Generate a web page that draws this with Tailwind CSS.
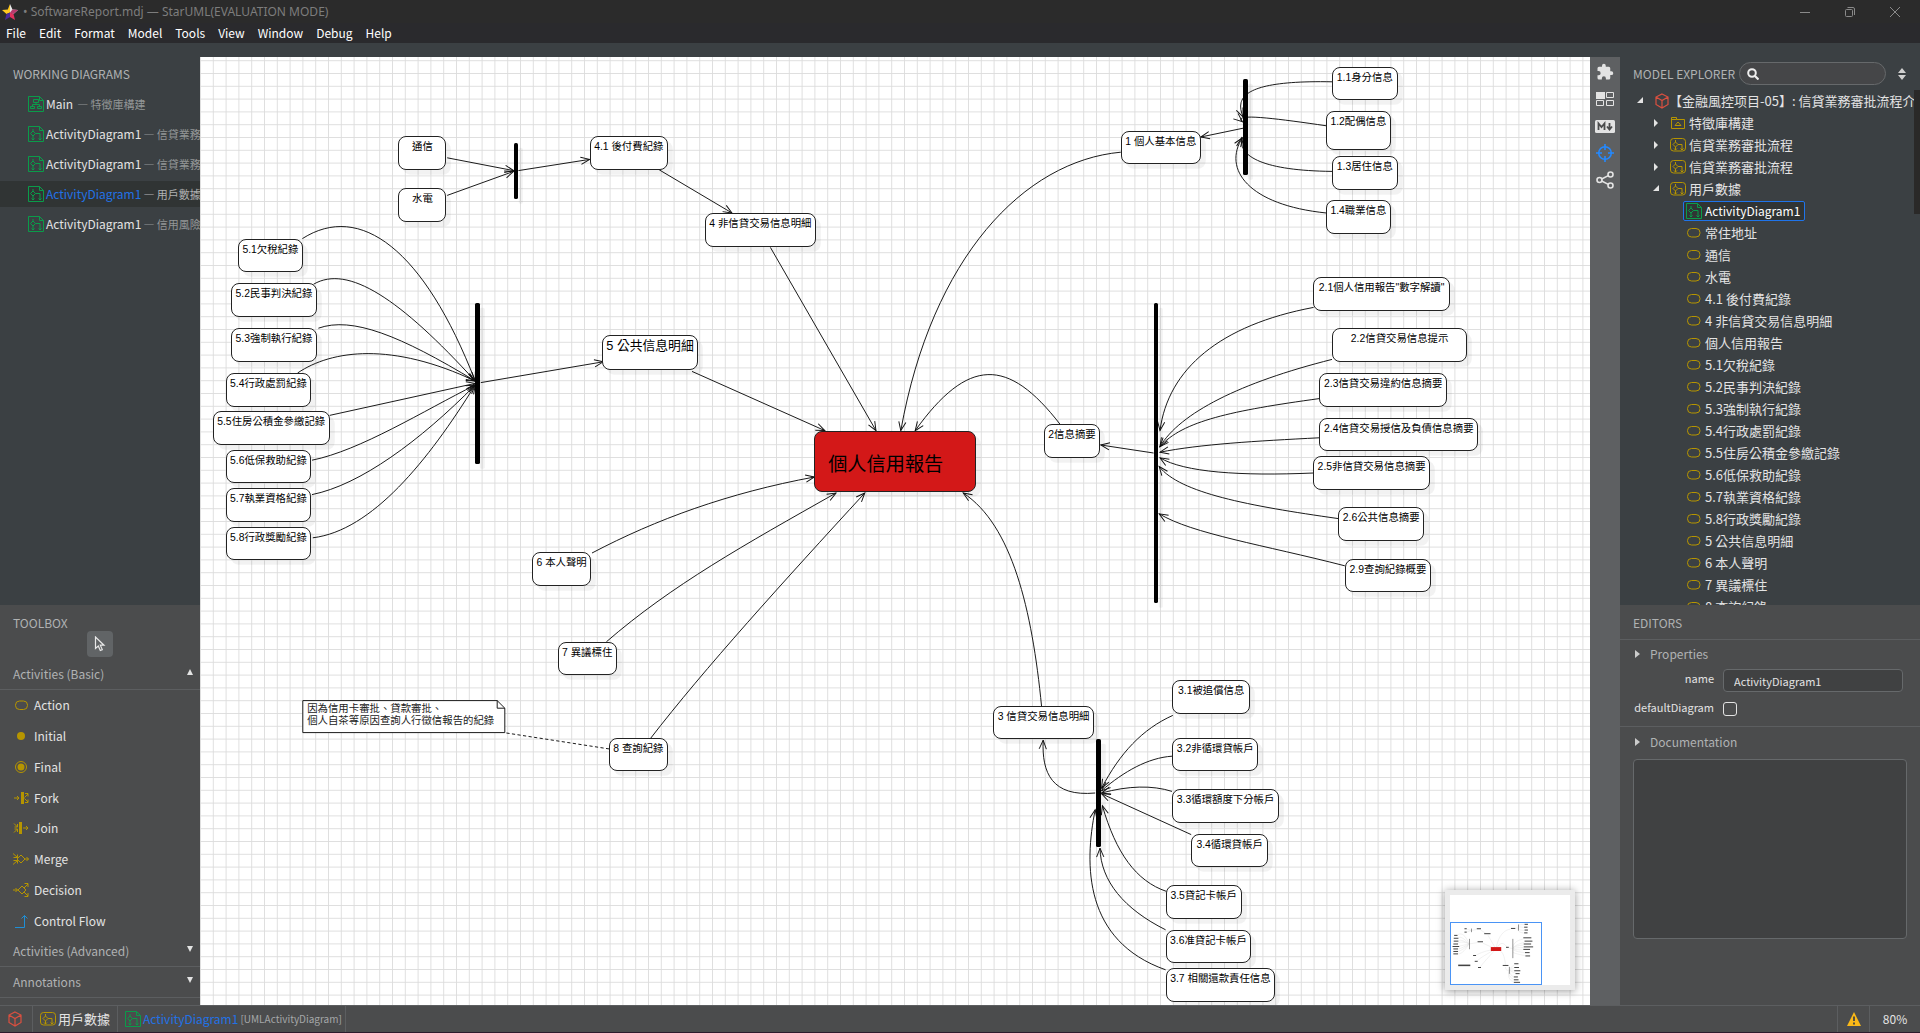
<!DOCTYPE html>
<html lang="zh-Hant">
<head>
<meta charset="utf-8">
<title>SoftwareReport.mdj — StarUML</title>
<script src="https://cdn.jsdelivr.net/npm/@tailwindcss/browser@4"></script>
</head>
<body class="flex h-screen flex-col overflow-hidden bg-[#3b4043] font-['Noto_Sans_CJK_TC',sans-serif] text-[12px] leading-5 text-[#e3e3e3]">

<svg class="hidden">
  <symbol id="i-activity-diagram" viewBox="0 0 16 16"><path d="M11.5.5H.5v15h15V4.5zM11.5.5v4h4M5 3v2M5 5L2.5 7.5 5 10l2.5-2.5zM5 10v4M3.5 12.5L5 14l1.5-1.5M7.5 7.5H12V14M10.5 12.5L12 14l1.5-1.5" fill="none" stroke="currentColor"/></symbol>
  <symbol id="i-class-diagram" viewBox="0 0 16 16"><path d="M11.5.5H.5v15h15V4.5zM11.5.5v4h4M5.5 3.5h5v3h-5zM2.5 10.500h4v2h-4zM9.500 10.500h4v2h-4zM8 6.500v2M4.500 10.500v-2h7v2" fill="none" stroke="currentColor"/></symbol>
  <symbol id="i-activity" viewBox="0 0 16 14"><rect x=".5" y=".5" width="15" height="12.500" rx="3" fill="none" stroke="currentColor"/><path d="M5.500 2v2M5.500 4L3 6.500 5.500 9 8 6.500zM5.500 9v3M4 10.500L5.500 12 7 10.500M8 6.500h4V12M10.500 10.500L12 12l1.500-1.500" fill="none" stroke="currentColor"/></symbol>
  <symbol id="i-package" viewBox="0 0 16 14"><path d="M1.500 12.500v-11h5v2h8v9zM1.500 3.500h5M5 9.500h6L8 6z" fill="none" stroke="currentColor"/></symbol>
  <symbol id="i-cube" viewBox="0 0 16 16"><path d="M8 1l6 3v7.500L8 15l-6-3.500V4zM2 4l6 3.500L14 4M8 7.500V15" fill="none" stroke="currentColor" stroke-width="1.200"/></symbol>
  <symbol id="i-action" viewBox="0 0 14 10"><rect x=".5" y=".5" width="12.500" height="8.500" rx="4" fill="none" stroke="currentColor"/></symbol>
</svg>

<header class="shrink-0">
  <div class="flex h-[23px] items-center bg-[#2b2b2b] pl-[2px] text-[#7d7d7d]">
    <svg class="size-4" viewBox="0 0 16 16"><path d="M8 0L5.800 5.400 0 6l4.500 4L8 8.500z" fill="#ffc91f"/><path d="M8 0v8.500l3.500 1.500L16 6l-5.500-.6z" fill="#e8e8e8"/><path d="M4.500 10L3 16l5-3V8.500z" fill="#4b2a9b"/><path d="M8 8.500V13l5 3-1.500-6z" fill="#e2325e"/><path d="M10.500 5.400L16 6l-4.500 4L8 8.500z" fill="#b93a6c"/></svg>
    <h1 class="ml-[5px] font-['Noto_Sans',sans-serif] text-[12px] font-normal">• SoftwareReport.mdj — StarUML(EVALUATION MODE)</h1>
    <div class="ml-auto flex items-center gap-[35px] pr-[20px]">
      <button aria-label="Minimize"><svg class="size-[10px]" viewBox="0 0 10 10"><path d="M0 5.500h10" stroke="#8a8a8a"/></svg></button>
      <button aria-label="Restore"><svg class="size-[10px]" viewBox="0 0 10 10" fill="none" stroke="#8a8a8a"><rect x=".5" y="2.500" width="7" height="7" rx="1"/><path d="M2.500.5h5.500a1.500 1.500 0 0 1 1.500 1.500v6"/></svg></button>
      <button aria-label="Close"><svg class="size-[10px]" viewBox="0 0 10 10"><path d="M0 0l10 10M10 0L0 10" stroke="#8a8a8a"/></svg></button>
    </div>
  </div>
  <nav class="flex h-5 items-center gap-[13px] bg-[#2a2a2d] pl-[6px] text-white">
    <button>File</button><button>Edit</button><button>Format</button><button>Model</button><button>Tools</button><button>View</button><button>Window</button><button>Debug</button><button>Help</button>
  </nav>
  <div class="h-[14px]"></div>
</header>

<div class="flex min-h-0 flex-1">
  <aside class="flex w-[200px] shrink-0 flex-col">
    <section class="min-h-0 flex-1">
      <h2 class="px-[13px] py-[7px] text-[#b0b2b3]">WORKING DIAGRAMS</h2>
      <ul class="flex flex-col gap-1 whitespace-nowrap">
        <li class="flex h-[26px] items-center gap-[2px] overflow-hidden pl-7"><svg class="size-4 shrink-0 text-[#0a9c4a]"><use href="#i-class-diagram"/></svg>Main<span class="ml-[2px] text-[11px] text-[#939697]">— 特徵庫構建</span></li>
        <li class="flex h-[26px] items-center gap-[2px] overflow-hidden pl-7"><svg class="size-4 shrink-0 text-[#0a9c4a]"><use href="#i-activity-diagram"/></svg>ActivityDiagram1<span class="text-[11px] text-[#939697]">— 信貸業務審批流程</span></li>
        <li class="flex h-[26px] items-center gap-[2px] overflow-hidden pl-7"><svg class="size-4 shrink-0 text-[#0a9c4a]"><use href="#i-activity-diagram"/></svg>ActivityDiagram1<span class="text-[11px] text-[#939697]">— 信貸業務審批流程</span></li>
        <li class="flex h-[26px] items-center gap-[2px] overflow-hidden bg-[#303434] pl-7 text-[#2272e6]"><svg class="size-4 shrink-0 text-[#0a9c4a]"><use href="#i-activity-diagram"/></svg>ActivityDiagram1<span class="text-[11px] text-[#b0b2b3]">— 用戶數據</span></li>
        <li class="flex h-[26px] items-center gap-[2px] overflow-hidden pl-7"><svg class="size-4 shrink-0 text-[#0a9c4a]"><use href="#i-activity-diagram"/></svg>ActivityDiagram1<span class="text-[11px] text-[#939697]">— 信用風險策略</span></li>
      </ul>
    </section>
    <section class="flex h-[400px] shrink-0 flex-col bg-[#4b4c4d]">
      <h2 class="px-[13px] pt-2 text-[#b0b2b3]">TOOLBOX</h2>
      <button aria-label="Select" class="mx-auto mt-[-2px] grid size-[26px] shrink-0 place-items-center rounded bg-[#616466]"><svg class="h-4 w-3" viewBox="0 0 12 16"><path d="M1.500 1v11.500l2.800-2.500 2 4.500 2-.9-2-4.400H10z" fill="none" stroke="#e8e8e8" stroke-width="1.200"/></svg></button>
      <button class="mt-[2px] flex h-[31px] shrink-0 items-center justify-between border-b border-[#5c5e60] pr-[7px] pl-[13px] text-[#b0b2b3]">Activities (Basic)<svg class="mb-1 size-[6px]" viewBox="0 0 6 6"><path d="M3 0l3 6H0z" fill="#e3e3e3"/></svg></button>
      <ul class="grid h-[246px] shrink-0 auto-rows-fr">
        <li class="flex items-center gap-[5px] pl-[13px]"><svg class="h-4 w-4 text-[#b69500]" viewBox="0 0 16 16"><rect x="2.500" y="4" width="12" height="8.500" rx="4" fill="none" stroke="currentColor"/></svg>Action</li>
        <li class="flex items-center gap-[5px] pl-[13px]"><svg class="h-4 w-4 text-[#b69500]" viewBox="0 0 16 16"><circle cx="8" cy="8" r="4" fill="currentColor"/></svg>Initial</li>
        <li class="flex items-center gap-[5px] pl-[13px]"><svg class="h-4 w-4 text-[#b69500]" viewBox="0 0 16 16"><circle cx="8" cy="8" r="5.500" fill="none" stroke="currentColor"/><circle cx="8" cy="8" r="3.500" fill="currentColor"/></svg>Final</li>
        <li class="flex items-center gap-[5px] pl-[13px]"><svg class="h-4 w-4 text-[#b69500]" viewBox="0 0 16 16"><path d="M8 2h3v12H8z" fill="currentColor"/><path d="M1 8h5M4 6l2 2-2 2M11.500 7.500L15 4M12 3.500h3v3M11.500 8.500L15 12M12 12.500h3v-3" fill="none" stroke="currentColor"/></svg>Fork</li>
        <li class="flex items-center gap-[5px] pl-[13px]"><svg class="h-4 w-4 text-[#b69500]" viewBox="0 0 16 16"><path d="M6 2h3v12H6z" fill="currentColor"/><path d="M1 3.500L4.500 7M4.500 4v3h-3M1 12.500L4.500 9M4.500 12V9h-3M10 8h5M13 6l2 2-2 2" fill="none" stroke="currentColor"/></svg>Join</li>
        <li class="flex items-center gap-[5px] pl-[13px]"><svg class="h-4 w-4 text-[#b69500]" viewBox="0 0 16 16"><path d="M8 4l4 4-4 4-4-4zM0 2.500l4.500 4M4.500 3.500v3h-4M0 13.500l4.500-4M4.500 12.500v-3h-4M12 8h3.500M13.500 6l2 2-2 2" fill="none" stroke="currentColor"/></svg>Merge</li>
        <li class="flex items-center gap-[5px] pl-[13px]"><svg class="h-4 w-4 text-[#b69500]" viewBox="0 0 16 16"><path d="M9 4l4 4-4 4-4-4zM0 8h4.500M2.500 6l2 2-2 2M11 6l4-4M11.500 1.500H15V5M11 10l4 4M11.500 14.500H15V11" fill="none" stroke="currentColor"/></svg>Decision</li>
        <li class="flex items-center gap-[5px] pl-[13px]"><svg class="h-4 w-4 text-[#1f8fd6]" viewBox="0 0 16 16"><path d="M2 14.500h9.500v-12M8.500 5.500l3-3 3 3" fill="none" stroke="currentColor"/></svg>Control Flow</li>
      </ul>
      <button class="flex h-[31px] shrink-0 items-center justify-between border-b border-[#5c5e60] pr-[7px] pl-[13px] text-[#b0b2b3]">Activities (Advanced)<svg class="mb-1 size-[6px]" viewBox="0 0 6 6"><path d="M0 0h6L3 6z" fill="#e3e3e3"/></svg></button>
      <button class="flex h-[31px] shrink-0 items-center justify-between border-b border-[#5c5e60] pr-[7px] pl-[13px] text-[#b0b2b3]">Annotations<svg class="mb-1 size-[6px]" viewBox="0 0 6 6"><path d="M0 0h6L3 6z" fill="#e3e3e3"/></svg></button>
    </section>
  </aside>

  <main class="relative min-w-0 flex-1 overflow-hidden bg-white">
    <!-- diagram layer, shown at 80% -->
    <div id="diagram" class="absolute inset-0 font-['Liberation_Sans','Noto_Sans_CJK_TC',sans-serif] text-[13px] leading-[15px] text-black [zoom:0.8]">
      <svg class="absolute inset-0 size-full">
        <defs>
          <pattern id="grid" y="4" width="16" height="16" patternUnits="userSpaceOnUse"><path d="M0 .5h16M.5 0v16" stroke="#dadada" stroke-width="1.200"/></pattern>
          <marker id="arrow" markerUnits="userSpaceOnUse" markerWidth="14" markerHeight="12" refX="12" refY="6" orient="auto"><path d="M1 1.500L12 6 1 10.500" fill="none" stroke="#111" stroke-width="1.200"/></marker>
        </defs>
        <rect width="100%" height="100%" fill="url(#grid)"/>
        <g id="edges" fill="none" stroke="#111" stroke-width="1.200" marker-end="url(#arrow)"></g>
        <path d="M383 845L512 865" fill="none" stroke="#111" stroke-width="1.200" stroke-dasharray="4 3"/>
        <path d="M128.500 804.500h243l9.500 9.500v30.500h-252.500z" fill="#fff" stroke="#111" stroke-width="1.200"/>
        <path d="M371.500 804.500v9.500h9.500" fill="none" stroke="#111" stroke-width="1.200"/>
      </svg>
      <p class="absolute top-[807px] left-[134px] text-[13px] leading-[15px] text-[#222]">因為信用卡審批、貸款審批、<br>個人自茶等原因查詢人行徵信報告的紀錄</p>
    </div>

    <!-- overview map -->
    <div class="absolute right-[15px] bottom-[15px] h-[100px] w-[130px] bg-[#ebebeb] p-[5px] shadow-[0_1px_8px_#00000066]">
      <div class="flex h-full flex-col items-start justify-end bg-white">
        <svg class="h-[63px] w-[92px] border border-[#4a94f5]" viewBox="0 0 1737 1185"><g id="overview-edges" fill="none" stroke="#ddd" stroke-width="8"></g><g id="overview"></g></svg>
      </div>
    </div>
  </main>

  <nav class="flex w-[30px] shrink-0 flex-col items-center gap-[9px] bg-[#5e6062] pt-[6px] text-[#e3e3e3]">
    <button aria-label="Extensions"><svg class="size-[18px]" viewBox="0 0 24 24" fill="currentColor"><path d="M20.500 11H19V7a2 2 0 0 0-2-2h-4V3.500a2.500 2.500 0 0 0-5 0V5H4a2 2 0 0 0-2 2v3.800h1.500a2.700 2.700 0 0 1 0 5.400H2V20a2 2 0 0 0 2 2h3.800v-1.500a2.700 2.700 0 0 1 5.400 0V22H17a2 2 0 0 0 2-2v-4h1.500a2.500 2.500 0 0 0 0-5z"/></svg></button>
    <button aria-label="Thumbnails"><svg class="size-[18px]" viewBox="0 0 18 18"><path d="M0 2h9v7H0z" fill="currentColor"/><path d="M10.500 2.500h7v5h-7zM10.500 10.500h7v5h-7zM.5 10.500h7v5h-7z" fill="none" stroke="currentColor"/></svg></button>
    <button aria-label="Markdown"><svg class="h-[18px] w-5" viewBox="0 0 20 18"><rect y="3" width="20" height="13" rx="1.500" fill="currentColor"/><path d="M3.500 13V6.500L6.500 10l3-3.500V13M14.500 6v6M12 9.500l2.500 3 2.500-3" fill="none" stroke="#4b4c4d" stroke-width="1.800"/></svg></button>
    <button aria-label="Locate" class="text-[#2489ff]"><svg class="size-[18px]" viewBox="0 0 18 18"><circle cx="9" cy="9" r="6.300" fill="none" stroke="currentColor" stroke-width="1.600"/><path d="M9 0v6M9 12v6M0 9h6M12 9h6" stroke="currentColor" stroke-width="1.600"/></svg></button>
    <button aria-label="Relationships"><svg class="size-[18px]" viewBox="0 0 18 18" fill="none" stroke="currentColor" stroke-width="1.600"><circle cx="3.500" cy="9" r="2.500"/><circle cx="14.500" cy="3.500" r="2.500"/><circle cx="14.500" cy="14.500" r="2.500"/><path d="M5.700 8l6.600-3.400M5.700 10l6.600 3.400"/></svg></button>
  </nav>

  <aside class="flex w-[300px] shrink-0 flex-col">
    <section class="flex min-h-0 flex-1 flex-col">
      <div class="flex h-[33px] shrink-0 items-center pl-[13px] whitespace-nowrap text-[#b0b2b3]">
        <h2>MODEL EXPLORER</h2>
        <div class="mr-3 ml-auto flex h-[23px] w-[147px] items-center rounded-full border border-[#66696b] bg-[#454648] pl-[7px]">
          <svg class="size-3 shrink-0" viewBox="0 0 12 12"><circle cx="5" cy="5" r="3.800" fill="none" stroke="#eee" stroke-width="2"/><path d="M8 8l3.500 3.500" stroke="#eee" stroke-width="2.200"/></svg>
          <input type="search" aria-label="Search model" class="min-w-0 flex-1 bg-transparent px-1 outline-none">
        </div>
        <button aria-label="Sort" class="mr-[14px]"><svg class="h-3 w-2" viewBox="0 0 8 12"><path d="M4 0l4 5H0zM0 7h8l-4 5z" fill="#d0d0d0"/></svg></button>
      </div>
      <div class="flex min-h-0 flex-1">
        <ul id="tree" class="min-w-0 flex-1 overflow-hidden text-[13px] whitespace-nowrap"></ul>
        <div class="w-[6px] shrink-0"><div class="h-[124px] bg-[#2a2928]"></div></div>
      </div>
    </section>
    <section class="h-[400px] shrink-0 bg-[#4b4c4d]">
      <h2 class="h-[35px] border-b border-[#5c5e60] px-[13px] pt-2 text-[#b0b2b3]">EDITORS</h2>
      <button class="flex h-7 w-full items-center gap-[10px] pl-[15px] text-[#b0b2b3]"><svg class="h-2 w-[5px]" viewBox="0 0 5 8"><path d="M0 0l5 4-5 4z" fill="#ccc"/></svg>Properties</button>
      <div class="grid grid-cols-[81px_1fr] gap-x-[9px] pl-[13px] text-[11px]">
        <label for="prop-name" class="text-right">name</label>
        <input id="prop-name" value="ActivityDiagram1" class="mt-[1px] mr-[17px] h-[23px] min-w-0 rounded border border-[#66696b] bg-[#404142] px-[10px] outline-none">
        <label for="prop-default" class="mt-[5px] text-right">defaultDiagram</label>
        <input id="prop-default" type="checkbox" class="mt-[10px] size-[14px] appearance-none rounded-[3px] border border-[#e3e3e3]">
      </div>
      <button class="mt-[9px] flex h-[31px] w-full items-center gap-[10px] border-t border-[#5c5e60] pl-[15px] text-[#b0b2b3]"><svg class="h-2 w-[5px]" viewBox="0 0 5 8"><path d="M0 0l5 4-5 4z" fill="#ccc"/></svg>Documentation</button>
      <div class="px-[13px] pt-[2px]"><textarea aria-label="Documentation" class="block h-[180px] w-full resize-none rounded border border-[#66696b] bg-[#404142]"></textarea></div>
    </section>
  </aside>
</div>

<footer class="flex h-7 shrink-0 items-stretch border-t border-b border-t-[#5c5e60] border-b-[#2c1a2c] bg-[#4b4c4d]">
  <div class="flex w-[33px] items-center justify-center border-r border-[#5c5e60] pr-[3px]"><svg class="size-4 text-[#db5040]"><use href="#i-cube"/></svg></div>
  <div class="flex items-center gap-[2px] border-r border-[#5c5e60] px-[7px] text-[13px]"><svg class="h-[14px] w-4 text-[#b69500]"><use href="#i-activity"/></svg>用戶數據</div>
  <div class="flex items-center gap-[2px] border-r border-[#5c5e60] pr-[3px] pl-[7px] text-[#2272e6]"><svg class="size-4 text-[#0a9c4a]"><use href="#i-activity-diagram"/></svg>ActivityDiagram1<span class="text-[10px] text-[#a5a7a8]">[UMLActivityDiagram]</span></div>
  <div class="ml-auto flex w-8 items-center justify-center border-l border-[#5c5e60]"><svg class="size-[14px]" viewBox="0 0 14 14"><path d="M7 0l7 14H0z" fill="#fbb917"/><path d="M7 4.500v4.500M7 10.500v2" stroke="#444" stroke-width="1.800"/></svg></div>
  <div class="flex w-[51px] items-center justify-center border-l border-[#5c5e60]">80%</div>
</footer>

<script>
// Diagram nodes in model units: [label, x, y, width, height]
const nodes = [
  ['通信',248,99,60,42],['水電',248,164,60,42],['4.1 後付費紀錄',487,99,98,42],['4 非信貸交易信息明細',631,195,139,42],
  ['5.1欠稅紀錄',47,227,82,42],['5.2民事判決紀錄',39,283,107,42],['5.3強制執行紀錄',39,339,107,42],['5.4行政處罰紀錄',32,395,107,42],
  ['5.5住房公積金參繳記錄',16,443,146,42],['5.6低保救助紀錄',32,491,107,42],['5.7執業資格紀錄',32,539,107,42],['5.8行政獎勵紀錄',32,587,107,42],
  ['6 本人聲明',415,619,74,42],['7 異議標住',447,731,74,42],['8 查詢紀錄',511,851,74,42],
  ['1.1身分信息',1415,12,82,42],['1.2配偶信息',1407,68,82,48],['1.3居住信息',1415,124,82,42],['1.4職業信息',1407,179,82,42],['1 個人基本信息',1151,92,100,42],
  ['2.1個人信用報告"數字解讀"',1391,275,172,42],['2.2信貸交易信息提示',1415,339,169,42],['2.3信貸交易違約信息摘要',1399,395,160,42],['2.4信貸交易授信及負債信息摘要',1399,451,199,42],
  ['2.5非信貸交易信息摘要',1391,499,147,42],['2.6公共信息摘要',1423,563,107,42],['2.9查詢紀錄概要',1431,627,108,42],['2信息摘要',1055,459,70,42],
  ['3 信貸交易信息明細',991,811,127,42],['3.1被追償信息',1215,779,98,42],['3.2非循環貸帳戶',1215,851,108,42],['3.3循環額度下分帳戶',1215,915,134,42],
  ['3.4循環貸帳戶',1239,971,96,42],['3.5貸記卡帳戶',1207,1035,95,42],['3.6准貸記卡帳戶',1207,1091,107,42],['3.7 相關還款責任信息',1207,1139,137,42]
];
const bars = [[392,108,70],[344,308,201],[1304,28,120],[1192,308,375],[1120,852,136]];
const edges = [
  'M309 126L392 142','M309 173L392 143','M398 142L487 128','M574 141L665 195','M713 238L845 467','M615 393L781 467','M351 407L504 381',
  'M128 227C200 181 280 240 344 405','M142 284C185 259 250 302 344 405','M148 339C190 324 250 348 344 405','M122 395C165 366 240 356 344 405',
  'M162 448L344 408','M140 504C200 492 280 442 344 410','M140 547C200 535 275 480 344 410','M141 601C215 592 285 505 344 410',
  'M490 620C570 578 660 545 768 525','M508 731C590 660 680 610 795 545','M563 852C630 765 730 655 831 545',
  'M1151 119C1030 130 915 250 876 467','M1075 459C1010 375 960 375 894 467','M1192 495L1126 485','M1052 812C1040 690 1015 585 954 545','M1119 920C1065 925 1052 895 1054 854',
  'M1304 89L1251 100','M1415 31C1310 29 1292 48 1304 75','M1408 86C1340 76 1290 70 1303 81','M1415 143C1330 142 1298 125 1302 101','M1408 195C1310 185 1278 140 1303 101',
  'M1392 313C1275 335 1210 390 1200 467','M1415 378C1300 407 1225 445 1200 487','M1399 427C1290 442 1228 455 1200 487','M1399 476C1320 480 1250 484 1200 494',
  'M1392 520C1300 524 1230 519 1200 501','M1423 577C1310 561 1225 545 1199 512','M1431 636C1330 610 1240 596 1199 571',
  'M1216 823C1178 840 1150 870 1127 914','M1215 874C1185 876 1155 893 1127 917','M1215 918C1190 910 1160 911 1127 920','M1239 972L1127 921',
  'M1208 1043C1170 1030 1145 995 1128 936','M1207 1091C1155 1065 1126 1030 1125 989','M1207 1141C1105 1105 1105 1010 1119 941'
];
const diagram = document.getElementById('diagram');
const place = (el, x, y, w, h) => { el.style.cssText = `left:${x}px;top:${y}px;width:${w}px;height:${h}px`; diagram.append(el); };
const add = (cls, text, x, y, w, h) => { const el = document.createElement('div'); el.className = cls; el.textContent = text; place(el, x, y, w, h); };
for (const [t, x, y, w, h] of nodes) add('absolute rounded-[10px] border border-[#222] bg-white pt-[5px] text-center whitespace-nowrap shadow-[6px_6px_0_#0000000d]', t, x, y, w, h);
add('absolute rounded-[10px] border border-[#222] bg-white pt-[4px] text-center text-[16px] leading-[18px] whitespace-nowrap shadow-[6px_6px_0_#0000000d]', '5 公共信息明細', 503, 347, 119, 44);
add('absolute flex items-center rounded-[10px] border border-[#222] bg-[#d31818] pt-[8px] pl-[16px] text-[24px] leading-[28px] whitespace-nowrap shadow-[6px_6px_0_#0000000d]', '個人信用報告', 768, 468, 202, 76);
for (const [x, y, h] of bars) add('absolute rounded-[2px] bg-black shadow-[6px_6px_0_#0000000d]', '', x, y, 6, h);
document.getElementById('edges').innerHTML = edges.map(d => `<path d="${d}"/>`).join('');
document.getElementById('overview-edges').innerHTML = edges.map(d => `<path d="${d}"/>`).join('');
document.getElementById('overview').innerHTML =
  nodes.map(([, x, y, w]) => `<rect x="${x + 8}" y="${y + 4}" width="${w - 16}" height="18" fill="#333"/>`).join('') +
  bars.map(([x, y, h]) => `<rect x="${x}" y="${y}" width="10" height="${h}" fill="#333"/>`).join('') +
  '<rect x="510" y="356" width="106" height="18" fill="#333"/><rect x="134" y="808" width="235" height="30" fill="#444"/><rect x="768" y="468" width="202" height="76" fill="#d31818"/>';

// Model tree: [level, icon, label, state]
const tree = [
  [0,'cube','【金融風控项目-05】: 信貸業務審批流程介紹','open'],[1,'package','特徵庫構建','closed'],[1,'activity','信貸業務審批流程','closed'],[1,'activity','信貸業務審批流程','closed'],[1,'activity','用戶數據','open'],
  [2,'activity-diagram','ActivityDiagram1','selected'],
  ...['常住地址','通信','水電','4.1 後付費紀錄','4 非信貸交易信息明細','個人信用報告','5.1欠稅紀錄','5.2民事判決紀錄','5.3強制執行紀錄','5.4行政處罰紀錄','5.5住房公積金參繳記錄','5.6低保救助紀錄','5.7執業資格紀錄','5.8行政獎勵紀錄','5 公共信息明細','6 本人聲明','7 異議標住','8 查詢紀錄'].map(t => [2,'action',t,''])
];
const pads = ['pl-[17px]', 'pl-[33px]', 'pl-[63px]'];
const icons = {
  cube: '-mr-[4px] size-4 text-[#db5040]', package: 'h-[14px] w-4 text-[#b69500]', activity: 'h-[14px] w-4 text-[#b69500]',
  'activity-diagram': 'size-4 text-[#0a9c4a]', action: 'ml-[4px] mr-[1px] h-[10px] w-[14px] text-[#b69500]'
};
const twisties = { open: 'M6 0v6H0z', closed: 'M1 0l4 4-4 4z' };
document.getElementById('tree').innerHTML = tree.map(([lv, ic, t, st]) => {
  const arrow = twisties[st] ? `<svg class="mr-[10px] h-2 w-[7px] shrink-0" viewBox="0 0 7 8"><path d="${twisties[st]}" fill="#e3e3e3"/></svg>` : '';
  const sel = st === 'selected' ? 'box-border h-5 rounded-[2px] border border-[#1f74ea] bg-[#303434] pr-[4px] pl-[2px] text-[12px] text-white' : '';
  return `<li class="flex h-[22px] items-center ${pads[lv]}">${arrow}<span class="flex items-center gap-[3px] ${sel}"><svg class="shrink-0 ${icons[ic]}"><use href="#i-${ic}"/></svg>${t}</span></li>`;
}).join('');
</script>
</body>
</html>
